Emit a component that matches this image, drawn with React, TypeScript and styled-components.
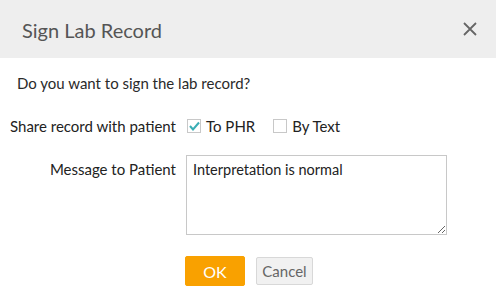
import styled, { createGlobalStyle } from 'styled-components'

const Global = createGlobalStyle`
  body {
    margin: 0;
    background: #fff;
    font-family: Lato, "Open Sans", sans-serif;
    color: #222;
  }
`

function App() {
  return (
    <Dialog>
      <Global />
      <Header>
        <Title>Sign Lab Record</Title>
        <CloseBtn aria-label="close">
          <svg width="14" height="14" viewBox="0 0 14 14">
            <path d="M1 1L13 13M13 1L1 13" stroke="#666" strokeWidth="1.8" />
          </svg>
        </CloseBtn>
      </Header>
      <Body>
        <Question>Do you want to sign the lab record?</Question>
        <FormRow>
          <Label>Share record with patient</Label>
          <Options>
            <Option>
              <Box $checked>
                <svg width="11" height="10" viewBox="0 0 11 10">
                  <path d="M1 5L4 8.5L10 1.5" stroke="#3aaeb5" strokeWidth="2" fill="none" />
                </svg>
              </Box>
              To PHR
            </Option>
            <Option>
              <Box />
              By Text
            </Option>
          </Options>
        </FormRow>
        <FormRow $top>
          <Label $pad>Message to Patient</Label>
          <Message defaultValue="Interpretation is normal" />
        </FormRow>
        <Actions>
          <Button $primary>OK</Button>
          <Button>Cancel</Button>
        </Actions>
      </Body>
    </Dialog>
  )
}

const Dialog = styled.div`
  width: 496px;
  height: 297px;
  background: #fff;
`
const Header = styled.div`
  height: 58px;
  background: #eeeeee;
  display: flex;
  align-items: center;
  justify-content: space-between;
  padding: 0 19px 0 22px;
  box-sizing: border-box;
`
const Title = styled.h1`
  margin: 0;
  font-size: 20px;
  font-weight: 400;
  color: #555;
  padding-top: 1px;
`
const CloseBtn = styled.span`
  display: flex;
  width: 14px;
  height: 14px;
  cursor: pointer;
`
const Body = styled.div`
  padding: 16px 10px 0 10px;
`
const Question = styled.p`
  margin: 0 0 25px 7px;
  font-size: 15px;
  line-height: 18px;
  color: #2a2a2a;
`
const FormRow = styled.div<{ $top?: boolean }>`
  display: flex;
  align-items: ${p => (p.$top ? 'flex-start' : 'center')};
  gap: 10px;
  margin-bottom: ${p => (p.$top ? '21px' : '20px')};
  font-size: 15px;
`
const Label = styled.div<{ $pad?: boolean }>`
  width: 166px;
  text-align: right;
  line-height: 18px;
  padding-top: ${p => (p.$pad ? '5px' : '0')};
  flex-shrink: 0;
`
const Options = styled.div`
  display: flex;
  gap: 17px;
  align-items: center;
`
const Option = styled.label`
  display: flex;
  align-items: center;
  gap: 5px;
  line-height: 18px;
`
const Box = styled.span<{ $checked?: boolean }>`
  width: 12px;
  height: 12px;
  border: 1px solid #c8c8c8;
  background: #fff;
  display: flex;
  align-items: center;
  justify-content: center;
  margin-left: 1px;
`
const Message = styled.textarea`
  display: block;
  width: 261px;
  height: 80px;
  box-sizing: border-box;
  border: 1px solid #c8c8c8;
  padding: 5px 6px;
  font-family: Lato, "Open Sans", sans-serif;
  font-size: 14.5px;
  color: #222;
  line-height: 18px;
  resize: both;
  outline: none;
  margin: 0;
`
const Actions = styled.div`
  display: flex;
  justify-content: center;
  align-items: center;
  gap: 11px;
  padding-left: 2px;
`
const Button = styled.button<{ $primary?: boolean }>`
  font-family: Lato, "Open Sans", sans-serif;
  font-size: ${p => (p.$primary ? '16px' : '15px')};
  height: ${p => (p.$primary ? '30px' : '28px')};
  padding: 0;
  width: ${p => (p.$primary ? '60px' : '57px')};
  border-radius: 2px;
  cursor: pointer;
  border: 1px solid ${p => (p.$primary ? '#f9a100' : '#d8d8d8')};
  background: ${p => (p.$primary ? '#f9a100' : '#f1f1f1')};
  color: ${p => (p.$primary ? '#fff' : '#666')};
`

export default App
